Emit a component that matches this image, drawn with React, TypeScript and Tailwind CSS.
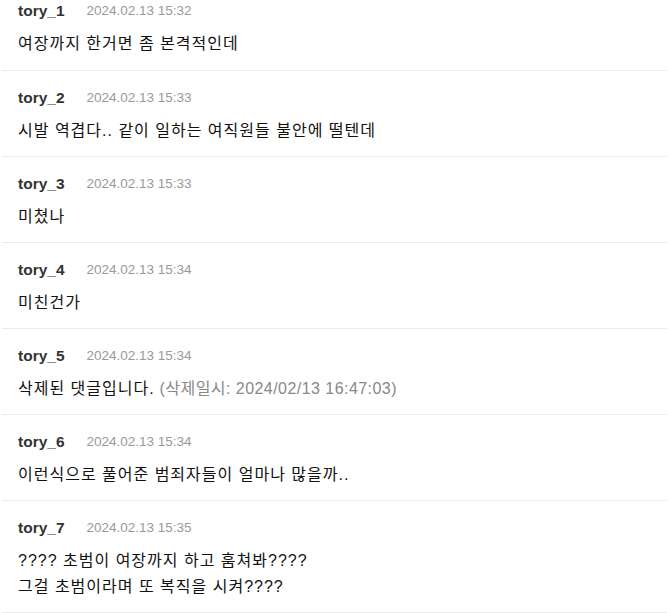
const comments = [
  { name: "tory_1", date: "2024.02.13 15:32", lines: ["여장까지 한거면 좀 본격적인데"] },
  { name: "tory_2", date: "2024.02.13 15:33", lines: ["시발 역겹다.. 같이 일하는 여직원들 불안에 떨텐데"] },
  { name: "tory_3", date: "2024.02.13 15:33", lines: ["미쳤나"] },
  { name: "tory_4", date: "2024.02.13 15:34", lines: ["미친건가"] },
  { name: "tory_5", date: "2024.02.13 15:34", lines: ["삭제된 댓글입니다."], deleted: "(삭제일시: 2024/02/13 16:47:03)" },
  { name: "tory_6", date: "2024.02.13 15:34", lines: ["이런식으로 풀어준 범죄자들이 얼마나 많을까.."] },
  {
    name: "tory_7",
    date: "2024.02.13 15:35",
    lines: ["???? 초범이 여장까지 하고 훔쳐봐????", "그걸 초범이라며 또 복직을 시켜????"],
  },
];

export default function App() {
  return (
    <div
      className="bg-white w-[669px] h-[613px] overflow-hidden"
      style={{ fontFamily: '"Liberation Sans", Arial, "Noto Sans CJK KR", sans-serif' }}
    >
      <ul className="mx-[2px]">
        {comments.map((c, i) => (
          <li
            key={c.name}
            className={`border-b border-[#ebebeb] px-4 ${i === 0 ? "pt-0 pb-[13px]" : "pt-4 pb-3"}`}
          >
            <div className="flex items-center h-[22px] gap-[22px]">
              <span className="text-[15.5px] font-bold text-[#333]">{c.name}</span>
              <span className="text-[13.5px] text-[#999]">{c.date}</span>
            </div>
            <div className="mt-[9px] text-[16px] leading-[26px] text-[#111] tracking-[1px]">
              {c.lines.map((l) => (
                <p key={l}>
                  {l}
                  {c.deleted && (
                    <span className="text-[#888] tracking-[0.45px]"> {c.deleted}</span>
                  )}
                </p>
              ))}
            </div>
          </li>
        ))}
      </ul>
    </div>
  );
}
